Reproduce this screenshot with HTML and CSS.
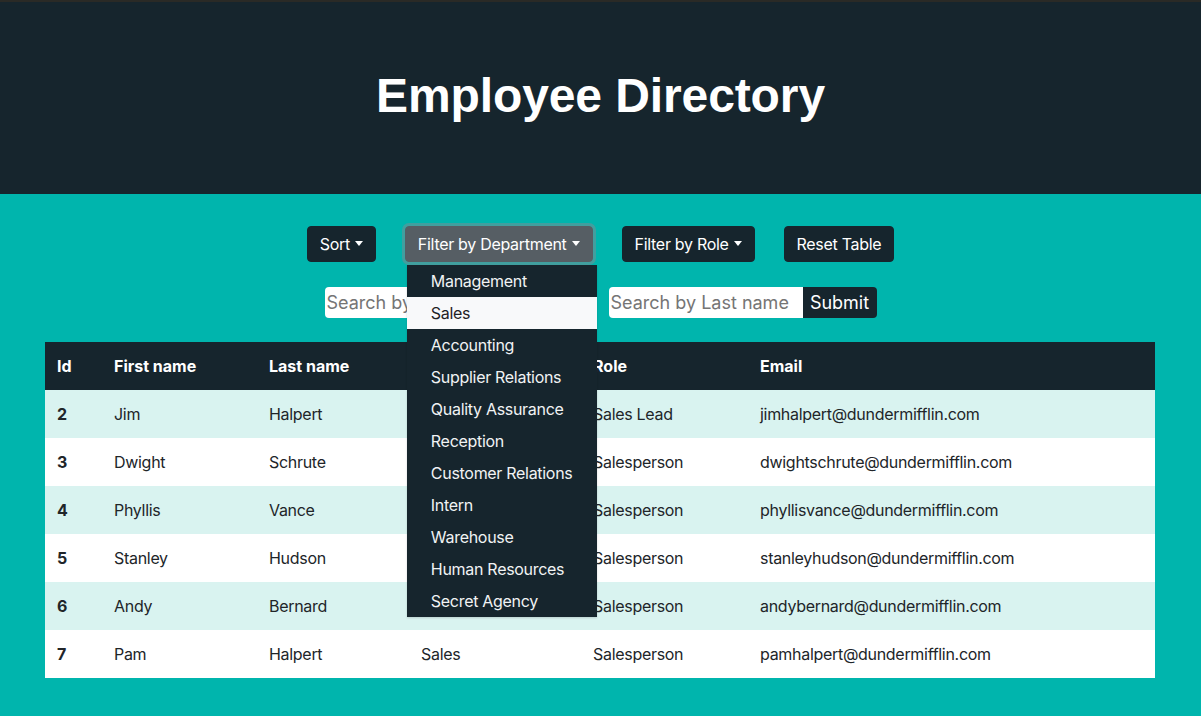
FILE: index.html
```html
<!DOCTYPE html>
<html lang="en">
<head>
<meta charset="utf-8">
<title>Employee Directory</title>
<link rel="stylesheet" href="styles.css">
</head>
<body>
<header class="hero">
  <h1 class="title">Employee Directory</h1>
</header>
<main class="content">
  <div class="controls">
    <button class="btn">Sort<span class="caret"></span></button>
    <div class="dropdown">
      <button class="btn btn-active">Filter by Department<span class="caret"></span></button>
      <ul class="menu">
        <li class="menu-item">Management</li>
        <li class="menu-item hover">Sales</li>
        <li class="menu-item">Accounting</li>
        <li class="menu-item">Supplier Relations</li>
        <li class="menu-item">Quality Assurance</li>
        <li class="menu-item">Reception</li>
        <li class="menu-item">Customer Relations</li>
        <li class="menu-item">Intern</li>
        <li class="menu-item">Warehouse</li>
        <li class="menu-item">Human Resources</li>
        <li class="menu-item">Secret Agency</li>
      </ul>
    </div>
    <button class="btn">Filter by Role<span class="caret"></span></button>
    <button class="btn">Reset Table</button>
  </div>
  <div class="searches">
    <form class="search">
      <input class="search-input" type="text" placeholder="Search by First name">
      <button class="search-btn" type="button">Submit</button>
    </form>
    <form class="search">
      <input class="search-input" type="text" placeholder="Search by Last name">
      <button class="search-btn" type="button">Submit</button>
    </form>
  </div>
  <table class="table">
    <colgroup>
      <col class="c-id"><col class="c-first"><col class="c-last"><col class="c-dept"><col class="c-role"><col>
    </colgroup>
    <thead>
      <tr><th>Id</th><th>First name</th><th>Last name</th><th>Department</th><th>Role</th><th>Email</th></tr>
    </thead>
    <tbody>
      <tr><td class="id">2</td><td>Jim</td><td>Halpert</td><td>Sales</td><td>Sales Lead</td><td>jimhalpert@dundermifflin.com</td></tr>
      <tr><td class="id">3</td><td>Dwight</td><td>Schrute</td><td>Sales</td><td>Salesperson</td><td>dwightschrute@dundermifflin.com</td></tr>
      <tr><td class="id">4</td><td>Phyllis</td><td>Vance</td><td>Sales</td><td>Salesperson</td><td>phyllisvance@dundermifflin.com</td></tr>
      <tr><td class="id">5</td><td>Stanley</td><td>Hudson</td><td>Sales</td><td>Salesperson</td><td>stanleyhudson@dundermifflin.com</td></tr>
      <tr><td class="id">6</td><td>Andy</td><td>Bernard</td><td>Sales</td><td>Salesperson</td><td>andybernard@dundermifflin.com</td></tr>
      <tr><td class="id">7</td><td>Pam</td><td>Halpert</td><td>Sales</td><td>Salesperson</td><td>pamhalpert@dundermifflin.com</td></tr>
    </tbody>
  </table>
</main>
</body>
</html>
```
FILE: styles.css
```css
* { box-sizing: border-box; }
html, body { margin: 0; padding: 0; }
body {
  background: #00b5ad;
  font-family: Inter, "Noto Sans", sans-serif;
  color: #212529;
  height: 716px;
  overflow: hidden;
}
.hero {
  background: #16252d;
  height: 194px;
  display: flex;
  align-items: center;
  justify-content: center;
  border-top: 2px solid #2a2a26;
}
.title {
  margin: 0;
  color: #fff;
  font-family: "Liberation Sans", Arial, sans-serif;
  font-weight: 700;
  font-size: 48px;
  line-height: 1;
  padding-bottom: 4px;
  letter-spacing: -0.1px;
}
.content {
  padding: 32px 45px 0;
}
.controls {
  display: flex;
  justify-content: center;
  gap: 29px;
  height: 36px;
}
.btn {
  font-family: Inter, "Noto Sans", sans-serif;
  font-size: 16px;
  letter-spacing: -0.3px;
  line-height: 24px;
  padding: 6px 12px;
  height: 36px;
  color: #fff;
  background: #16252d;
  border: 1px solid #16252d;
  border-radius: 4px;
  display: inline-flex;
  align-items: center;
}
.btn-active {
  background: #565e64;
  border-color: #565e64;
  box-shadow: 0 0 0 3px rgba(130, 138, 145, 0.5);
}
.caret {
  display: inline-block;
  width: 0; height: 0;
  border-left: 4.5px solid transparent;
  border-right: 4.5px solid transparent;
  border-top: 5px solid #fff;
  margin-left: 5px;
  margin-top: -1px;
}
.dropdown { position: relative; }
.menu {
  position: absolute;
  top: 39px;
  left: 2px;
  width: 190px;
  margin: 0;
  padding: 0;
  list-style: none;
  background: #16252d;
  z-index: 10;
  box-shadow: 0 1px 2px rgba(0,0,0,0.15);
}
.menu-item {
  height: 32px;
  line-height: 32px;
  padding: 0 24px;
  color: #f1f3f4;
  font-size: 16px;
  letter-spacing: -0.3px;
  white-space: nowrap;
}
.menu-item.hover {
  background: #f8f9fa;
  color: #1e2125;
}
.searches {
  display: flex;
  justify-content: center;
  gap: 16px;
  margin-top: 25px;
}
.search {
  display: flex;
  margin: 0;
  height: 31px;
}
.search-input {
  width: 194px;
  height: 31px;
  border: none;
  border-radius: 4px 0 0 4px;
  padding: 0 2px;
  font-family: Inter, "Noto Sans", sans-serif;
  font-size: 18px;
  background: #fff;
  outline: none;
}
.search-input::placeholder { color: #757575; }
.search-btn {
  width: 74px;
  height: 31px;
  border: none;
  border-radius: 0 4px 4px 0;
  background: #16252d;
  color: #fff;
  font-family: Inter, "Noto Sans", sans-serif;
  font-size: 18px;
  padding: 0 6px;
}
.table {
  margin-top: 24px;
  width: 1110px;
  border-collapse: collapse;
  table-layout: fixed;
  background: #fff;
  font-size: 16px;
}
.c-id { width: 57px; }
.c-first { width: 155px; }
.c-last { width: 152px; }
.c-dept { width: 172px; }
.c-role { width: 167px; }
.table th, .table td {
  height: 48px;
  padding: 0 12px;
  text-align: left;
  vertical-align: middle;
  white-space: nowrap;
}
.table thead th {
  background: #16252d;
  color: #fff;
  font-weight: 700;
}
.table tbody tr:nth-child(odd) td { background: #d9f3f0; }
.table td { color: #212529; letter-spacing: -0.3px; }
.table td.id { font-weight: 700; letter-spacing: 0; }
```
